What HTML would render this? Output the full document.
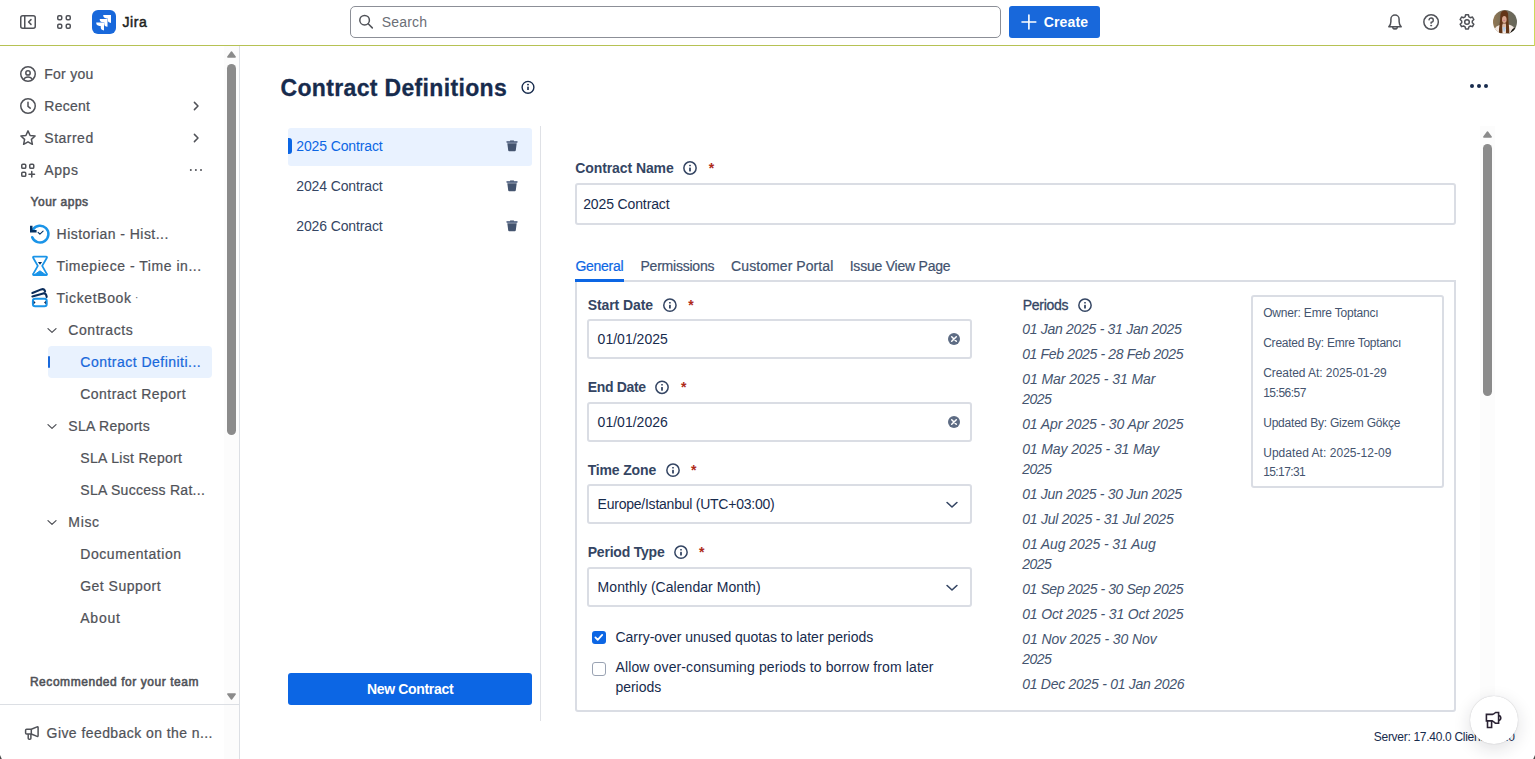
<!DOCTYPE html>
<html lang="en">
<head>
<meta charset="utf-8">
<title>Contract Definitions - Jira</title>
<style>
*{box-sizing:border-box;margin:0;padding:0}
html,body{width:1535px;height:759px;overflow:hidden;background:#fff}
body{position:relative;font-family:"Liberation Sans",sans-serif;color:#172b4d}
.a{position:absolute}
.t{position:absolute;white-space:pre;line-height:20px;height:20px}
svg.i{position:absolute;left:0;top:0;width:1535px;height:759px;overflow:visible;pointer-events:none}
.bx{position:absolute;border:2px solid #dadde4;border-radius:3px;background:#fff}
.thumb{position:absolute;width:9px;border-radius:4.5px;background:#8b8b8b}
.track{position:absolute;width:15px;background:#fcfcfc}
</style>
</head>
<body>

<!-- ================= SIDEBAR ================= -->
<div class="a" style="left:0;top:46px;width:240px;height:713px;border-right:1px solid #dcdfe4;background:#fff"></div>
<div class="track" style="left:224px;top:46px;height:713px"></div>
<div class="thumb" style="left:227px;top:64px;height:370.5px"></div>
<div class="a" style="left:0;top:704px;width:239px;height:1px;background:#dcdfe4"></div>
<div class="a" style="left:48px;top:346px;width:164px;height:32px;border-radius:4px;background:#e9f2fe"></div>
<div class="a" style="left:48px;top:356px;width:2px;height:12px;border-radius:1px;background:#1868db"></div>
<span class="t" style="left:44.3px;top:64.0px;font-size:14px;color:#505258;letter-spacing:0.239px;-webkit-text-stroke:.22px;">For you</span>
<span class="t" style="left:44.3px;top:96.0px;font-size:14px;color:#505258;letter-spacing:0.228px;-webkit-text-stroke:.22px;">Recent</span>
<span class="t" style="left:44.3px;top:128.0px;font-size:14px;color:#505258;letter-spacing:0.496px;-webkit-text-stroke:.22px;">Starred</span>
<span class="t" style="left:44.3px;top:160.0px;font-size:14px;color:#505258;letter-spacing:0.593px;-webkit-text-stroke:.22px;">Apps</span>
<span class="t" style="left:30.6px;top:191.5px;font-size:12px;color:#505258;letter-spacing:0.486px;-webkit-text-stroke:.55px;">Your apps</span>
<span class="t" style="left:56.6px;top:224.0px;font-size:14px;color:#505258;letter-spacing:0.457px;-webkit-text-stroke:.22px;">Historian - Hist...</span>
<span class="t" style="left:56.6px;top:256.0px;font-size:14px;color:#505258;letter-spacing:0.538px;-webkit-text-stroke:.22px;">Timepiece - Time in...</span>
<span class="t" style="left:56.6px;top:288.0px;font-size:14px;color:#505258;letter-spacing:0.630px;-webkit-text-stroke:.22px;">TicketBook</span>
<span class="t" style="left:135.0px;top:288.0px;font-size:10px;color:#505258;">·</span>
<span class="t" style="left:68.3px;top:320.0px;font-size:14px;color:#505258;letter-spacing:0.560px;-webkit-text-stroke:.22px;">Contracts</span>
<span class="t" style="left:80.3px;top:352.0px;font-size:14px;color:#1868db;letter-spacing:0.481px;-webkit-text-stroke:.22px;">Contract Definiti...</span>
<span class="t" style="left:80.3px;top:384.0px;font-size:14px;color:#505258;letter-spacing:0.462px;-webkit-text-stroke:.22px;">Contract Report</span>
<span class="t" style="left:68.3px;top:416.0px;font-size:14px;color:#505258;letter-spacing:0.289px;-webkit-text-stroke:.22px;">SLA Reports</span>
<span class="t" style="left:80.3px;top:448.0px;font-size:14px;color:#505258;letter-spacing:0.316px;-webkit-text-stroke:.22px;">SLA List Report</span>
<span class="t" style="left:80.3px;top:480.0px;font-size:14px;color:#505258;letter-spacing:0.274px;-webkit-text-stroke:.22px;">SLA Success Rat...</span>
<span class="t" style="left:68.3px;top:512.0px;font-size:14px;color:#505258;letter-spacing:0.673px;-webkit-text-stroke:.22px;">Misc</span>
<span class="t" style="left:80.3px;top:544.0px;font-size:14px;color:#505258;letter-spacing:0.552px;-webkit-text-stroke:.22px;">Documentation</span>
<span class="t" style="left:80.2px;top:576.0px;font-size:14px;color:#505258;letter-spacing:0.490px;-webkit-text-stroke:.22px;">Get Support</span>
<span class="t" style="left:80.2px;top:608.0px;font-size:14px;color:#505258;letter-spacing:0.802px;-webkit-text-stroke:.22px;">About</span>
<span class="t" style="left:29.9px;top:671.5px;font-size:12px;color:#505258;letter-spacing:0.550px;-webkit-text-stroke:.55px;">Recommended for your team</span>
<span class="t" style="left:46.6px;top:723.0px;font-size:14px;color:#505258;letter-spacing:0.427px;-webkit-text-stroke:.22px;">Give feedback on the n...</span>

<!-- ================= HEADER ================= -->
<div class="a" style="left:0;top:0;width:1535px;height:45px;background:#fff"></div>
<div class="a" style="left:0;top:45px;width:1535px;height:1px;background:#b6c254"></div>
<div class="a" style="left:1534px;top:0;width:1px;height:46px;background:#ccdb5b"></div>
<div class="a" style="left:350px;top:6px;width:651px;height:32px;border:1px solid #8c8f97;border-radius:5px;background:#fff"></div>
<div class="a" style="left:1009px;top:6px;width:91px;height:32px;border-radius:3px;background:#1868db"></div>
<div class="a" style="left:92px;top:10px;width:24px;height:24px;border-radius:6px;background:#1868db"></div>
<span class="t" style="left:122.4px;top:12.0px;font-size:14px;color:#1e1f21;letter-spacing:0.646px;-webkit-text-stroke:.5px;">Jira</span>
<span class="t" style="left:381.7px;top:12.0px;font-size:14px;color:#6b6e76;letter-spacing:0.188px;">Search</span>
<span class="t" style="left:1043.7px;top:12.0px;font-size:14px;color:#ffffff;font-weight:bold;letter-spacing:0.141px;">Create</span>

<!-- ================= MAIN ================= -->
<div class="a" style="left:540px;top:126px;width:1px;height:595px;background:#dfe1e6"></div>
<div class="a" style="left:288px;top:128px;width:244px;height:38px;border-radius:3px;background:#e9f2ff"></div>
<div class="a" style="left:288px;top:138px;width:4px;height:16px;border-radius:0 3px 3px 0;background:#0c66e4"></div>
<div class="a" style="left:288px;top:673px;width:244px;height:32px;border-radius:3px;background:#0c66e4"></div>

<div class="bx" style="left:575px;top:183px;width:881px;height:42px"></div>
<div class="bx" style="left:575px;top:280px;width:881px;height:432px;border-radius:0 0 3px 3px"></div>
<div class="a" style="left:575px;top:279px;width:49px;height:3px;background:#0c66e4"></div>
<div class="bx" style="left:587px;top:319px;width:385px;height:40px"></div>
<div class="bx" style="left:587px;top:402px;width:385px;height:40px"></div>
<div class="bx" style="left:587px;top:484px;width:385px;height:40px"></div>
<div class="bx" style="left:587px;top:567px;width:385px;height:40px"></div>
<div class="bx" style="left:1251px;top:295px;width:193px;height:193px"></div>
<div class="a" style="left:592px;top:630.5px;width:13.5px;height:13.5px;border-radius:3px;background:#0c66e4"></div>
<div class="a" style="left:592px;top:662px;width:13.5px;height:13.5px;border-radius:3px;border:1.5px solid #9aa3b3;background:#fff"></div>
<div class="track" style="left:1480px;top:126px;height:595px"></div>
<div class="thumb" style="left:1483px;top:144px;height:252px"></div>
<span class="t" style="left:280.5px;top:77.5px;font-size:23px;color:#172b4d;font-weight:bold;letter-spacing:0.338px;-webkit-text-stroke:.3px;">Contract Definitions</span>
<span class="t" style="left:296.3px;top:136.3px;font-size:14px;color:#0c66e4;letter-spacing:-0.129px;">2025 Contract</span>
<span class="t" style="left:296.3px;top:176.3px;font-size:14px;color:#344563;letter-spacing:-0.129px;">2024 Contract</span>
<span class="t" style="left:296.3px;top:216.3px;font-size:14px;color:#344563;letter-spacing:-0.129px;">2026 Contract</span>
<span class="t" style="left:366.9px;top:679.0px;font-size:14px;color:#ffffff;font-weight:bold;letter-spacing:-0.321px;">New Contract</span>
<span class="t" style="left:575.2px;top:158.0px;font-size:14px;color:#344563;font-weight:bold;letter-spacing:-0.083px;">Contract Name</span>
<span class="t" style="left:708.7px;top:158.0px;font-size:14px;color:#ae2a19;font-weight:bold;">*</span>
<span class="t" style="left:583.2px;top:194.3px;font-size:14px;color:#172b4d;letter-spacing:-0.129px;">2025 Contract</span>
<span class="t" style="left:575.5px;top:256.3px;font-size:14px;color:#0c66e4;letter-spacing:-0.302px;-webkit-text-stroke:.2px;">General</span>
<span class="t" style="left:640.5px;top:256.3px;font-size:14px;color:#42526e;letter-spacing:-0.225px;-webkit-text-stroke:.2px;">Permissions</span>
<span class="t" style="left:731.1px;top:256.3px;font-size:14px;color:#42526e;letter-spacing:0.075px;-webkit-text-stroke:.2px;">Customer Portal</span>
<span class="t" style="left:849.7px;top:256.3px;font-size:14px;color:#42526e;letter-spacing:-0.224px;-webkit-text-stroke:.2px;">Issue View Page</span>
<span class="t" style="left:587.7px;top:295.0px;font-size:14px;color:#344563;font-weight:bold;letter-spacing:-0.082px;">Start Date</span>
<span class="t" style="left:688.3px;top:295.0px;font-size:14px;color:#ae2a19;font-weight:bold;">*</span>
<span class="t" style="left:597.6px;top:329.3px;font-size:14px;color:#172b4d;letter-spacing:0.014px;">01/01/2025</span>
<span class="t" style="left:587.7px;top:377.3px;font-size:14px;color:#344563;font-weight:bold;letter-spacing:-0.327px;">End Date</span>
<span class="t" style="left:680.9px;top:377.3px;font-size:14px;color:#ae2a19;font-weight:bold;">*</span>
<span class="t" style="left:597.6px;top:412.0px;font-size:14px;color:#172b4d;letter-spacing:0.014px;">01/01/2026</span>
<span class="t" style="left:587.7px;top:460.2px;font-size:14px;color:#344563;font-weight:bold;letter-spacing:-0.158px;">Time Zone</span>
<span class="t" style="left:691.1px;top:460.2px;font-size:14px;color:#ae2a19;font-weight:bold;">*</span>
<span class="t" style="left:597.6px;top:493.9px;font-size:14px;color:#172b4d;letter-spacing:-0.237px;">Europe/Istanbul (UTC+03:00)</span>
<span class="t" style="left:587.7px;top:542.2px;font-size:14px;color:#344563;font-weight:bold;letter-spacing:-0.209px;">Period Type</span>
<span class="t" style="left:699.1px;top:542.2px;font-size:14px;color:#ae2a19;font-weight:bold;">*</span>
<span class="t" style="left:597.6px;top:577.3px;font-size:14px;color:#172b4d;letter-spacing:0.050px;">Monthly (Calendar Month)</span>
<span class="t" style="left:615.5px;top:627.3px;font-size:14px;color:#172b4d;letter-spacing:-0.016px;">Carry-over unused quotas to later periods</span>
<span class="t" style="left:615.5px;top:657.4px;font-size:14px;color:#172b4d;letter-spacing:0.125px;">Allow over-consuming periods to borrow from later</span>
<span class="t" style="left:615.5px;top:677.3px;font-size:14px;color:#172b4d;letter-spacing:-0.037px;">periods</span>
<span class="t" style="left:1022.7px;top:295.2px;font-size:14px;color:#344563;letter-spacing:-0.278px;-webkit-text-stroke:.3px;">Periods</span>
<span class="t" style="left:1022.2px;top:319.4px;font-size:14px;color:#44546f;font-style:italic;letter-spacing:-0.291px;">01 Jan 2025 - 31 Jan 2025</span>
<span class="t" style="left:1022.2px;top:344.0px;font-size:14px;color:#44546f;font-style:italic;letter-spacing:-0.349px;">01 Feb 2025 - 28 Feb 2025</span>
<span class="t" style="left:1022.2px;top:369.2px;font-size:14px;color:#44546f;font-style:italic;letter-spacing:-0.070px;">01 Mar 2025 - 31 Mar</span>
<span class="t" style="left:1022.2px;top:389.2px;font-size:14px;color:#44546f;font-style:italic;letter-spacing:-0.552px;">2025</span>
<span class="t" style="left:1022.2px;top:414.3px;font-size:14px;color:#44546f;font-style:italic;letter-spacing:-0.111px;">01 Apr 2025 - 30 Apr 2025</span>
<span class="t" style="left:1022.2px;top:439.2px;font-size:14px;color:#44546f;font-style:italic;letter-spacing:-0.121px;">01 May 2025 - 31 May</span>
<span class="t" style="left:1022.2px;top:459.2px;font-size:14px;color:#44546f;font-style:italic;letter-spacing:-0.552px;">2025</span>
<span class="t" style="left:1022.2px;top:484.2px;font-size:14px;color:#44546f;font-style:italic;letter-spacing:-0.282px;">01 Jun 2025 - 30 Jun 2025</span>
<span class="t" style="left:1022.2px;top:509.2px;font-size:14px;color:#44546f;font-style:italic;letter-spacing:-0.239px;">01 Jul 2025 - 31 Jul 2025</span>
<span class="t" style="left:1022.2px;top:534.2px;font-size:14px;color:#44546f;font-style:italic;letter-spacing:-0.089px;">01 Aug 2025 - 31 Aug</span>
<span class="t" style="left:1022.2px;top:554.2px;font-size:14px;color:#44546f;font-style:italic;letter-spacing:-0.552px;">2025</span>
<span class="t" style="left:1022.2px;top:579.2px;font-size:14px;color:#44546f;font-style:italic;letter-spacing:-0.415px;">01 Sep 2025 - 30 Sep 2025</span>
<span class="t" style="left:1022.2px;top:604.2px;font-size:14px;color:#44546f;font-style:italic;letter-spacing:-0.154px;">01 Oct 2025 - 31 Oct 2025</span>
<span class="t" style="left:1022.2px;top:629.2px;font-size:14px;color:#44546f;font-style:italic;letter-spacing:-0.090px;">01 Nov 2025 - 30 Nov</span>
<span class="t" style="left:1022.2px;top:649.2px;font-size:14px;color:#44546f;font-style:italic;letter-spacing:-0.552px;">2025</span>
<span class="t" style="left:1022.2px;top:674.2px;font-size:14px;color:#44546f;font-style:italic;letter-spacing:-0.275px;">01 Dec 2025 - 01 Jan 2026</span>
<span class="t" style="left:1263.2px;top:303.3px;font-size:12px;color:#44546f;letter-spacing:-0.193px;">Owner: Emre Toptancı</span>
<span class="t" style="left:1263.2px;top:333.0px;font-size:12px;color:#44546f;letter-spacing:-0.236px;">Created By: Emre Toptancı</span>
<span class="t" style="left:1263.2px;top:362.8px;font-size:12px;color:#44546f;letter-spacing:-0.060px;">Created At: 2025-01-29</span>
<span class="t" style="left:1263.2px;top:382.6px;font-size:12px;color:#44546f;letter-spacing:-0.488px;">15:56:57</span>
<span class="t" style="left:1263.2px;top:413.2px;font-size:12px;color:#44546f;letter-spacing:-0.216px;">Updated By: Gizem Gökçe</span>
<span class="t" style="left:1263.2px;top:442.9px;font-size:12px;color:#44546f;letter-spacing:0.041px;">Updated At: 2025-12-09</span>
<span class="t" style="left:1263.2px;top:462.4px;font-size:12px;color:#44546f;letter-spacing:-0.603px;">15:17:31</span>
<span class="t" style="left:1373.8px;top:727.0px;font-size:12px;color:#172b4d;letter-spacing:-0.294px;">Server: 17.40.0 Client: 1.7.0</span>
<div class="a" style="left:1470px;top:696px;width:48px;height:48px;border-radius:50%;background:#fff;box-shadow:0 0 1px rgba(30,30,40,.3),0 5px 18px rgba(30,30,40,.14)"></div>

<!-- ================= ICONS ================= -->
<svg class="i" viewBox="0 0 1535 759" fill="none" stroke-linecap="round" stroke-linejoin="round">
<!-- header left icons -->
<g stroke="#505258" stroke-width="1.5">
<rect x="20.75" y="15.75" width="14.5" height="12.5" rx="2"/>
<path d="M24.75 15.75V28.25M31 19.6L28.6 22L31 24.4"/>
<rect x="57.75" y="15.75" width="4" height="4" rx="1.2"/><rect x="66.25" y="15.75" width="4" height="4" rx="1.2"/>
<rect x="57.75" y="24.25" width="4" height="4" rx="1.2"/><rect x="66.25" y="24.25" width="4" height="4" rx="1.2"/>
</g>
<!-- jira logo -->
<g fill="#fff" stroke="none">
<path d="M103.2 15.1H111V22.9A3.3 3.3 0 0 1 107.7 19.6V18.4H106.5A3.3 3.3 0 0 1 103.2 15.1Z"/>
<path d="M99.7 18.9H107.5V26.7A3.3 3.3 0 0 1 104.2 23.4V22.2H103A3.3 3.3 0 0 1 99.7 18.9Z"/>
<path d="M96.2 22.6H104V30.4A3.3 3.3 0 0 1 100.7 27.1V25.9H99.5A3.3 3.3 0 0 1 96.2 22.6Z"/>
</g>
<!-- search icon -->
<g stroke="#505258" stroke-width="1.5"><circle cx="364.6" cy="20.2" r="4.8"/><path d="M368.2 23.8L372.3 27.9"/></g>
<!-- create plus -->
<path d="M1022 22H1035.8M1028.9 15.1V28.9" stroke="#fff" stroke-width="1.6"/>
<!-- bell -->
<g stroke="#505258" stroke-width="1.5">
<path d="M1388.8 26.7C1390.5 25.1 1390.9 23.6 1390.9 21.4V19.2A4.1 4.1 0 0 1 1399.1 19.2V21.4C1399.1 23.6 1399.5 25.1 1401.2 26.7Z"/>
<path d="M1392.7 27.6A2.5 2.5 0 0 0 1397.3 27.6" fill="#8d8f95"/>
<!-- help -->
<circle cx="1431.1" cy="22" r="7.25"/>
<path d="M1429 19.9A2.15 2.15 0 1 1 1431.1 22.3V23.2" stroke-width="1.4"/>
<circle cx="1431.1" cy="25.6" r=".55" fill="#505258" stroke-width=".8"/>
<!-- gear -->
<circle cx="1467" cy="22" r="2.3"/>
<path d="M1465.6 14.75h2.8l.5 2.1 1.5.85 2.05-.65 1.4 2.45-1.55 1.5v1.7l1.55 1.5-1.4 2.45-2.05-.65-1.5.85-.5 2.1h-2.8l-.5-2.1-1.5-.85-2.05.65-1.4-2.45 1.55-1.5v-1.7l-1.55-1.5 1.4-2.45 2.05.65 1.5-.85z"/>
</g>
<!-- avatar -->
<defs>
<clipPath id="av"><circle cx="1505" cy="22" r="12"/></clipPath>
<linearGradient id="avbg" x1="0" x2="1" y1="0" y2="0"><stop offset="0" stop-color="#9a7a52"/><stop offset=".4" stop-color="#756c57"/><stop offset="1" stop-color="#65665c"/></linearGradient>
<filter id="avb" x="-10%" y="-10%" width="120%" height="120%"><feGaussianBlur stdDeviation=".7"/></filter>
</defs>
<g clip-path="url(#av)" stroke="none">
<rect x="1491" y="8" width="28" height="28" fill="url(#avbg)"/>
<g filter="url(#avb)">
<path d="M1494 36V30Q1496 25.6 1500.5 24.8H1509.5Q1513.6 25.6 1515 30V36Z" fill="#f3e8e1"/>
<path d="M1509.5 36Q1510.5 30.5 1513.5 28.2Q1517 27.5 1519 28V36Z" fill="#15120f"/>
<path d="M1497 33.2Q1505 35.2 1512 32.8V36H1497Z" fill="#1b1714"/>
<path d="M1504.6 10.6C1500.6 10.6 1500.3 14.5 1500.2 18.5C1500.1 23 1498.8 27 1498.9 33H1502.5C1502.3 29.5 1502.4 26.5 1502.6 24H1505.9C1506.1 26.5 1506 29.5 1505.9 33H1509.3C1509.4 28 1508.5 23 1508.3 18.5C1508.1 14.5 1508.6 10.6 1504.6 10.6Z" fill="#633519"/>
<ellipse cx="1504.3" cy="19.4" rx="2.3" ry="3.5" fill="#d8a78f"/>
<path d="M1502.6 23.5H1505.9L1505.8 29H1502.8Z" fill="#dfbba8"/>
<path d="M1502.6 27.2H1506L1505 31.5H1503.6Z" fill="#b3cceb"/>
<ellipse cx="1504.2" cy="20.4" rx="1.1" ry=".6" fill="#c9808a"/>
</g>
</g>
<!-- more dots -->
<g fill="#172b4d" stroke="none"><circle cx="1472" cy="86" r="2"/><circle cx="1479" cy="86" r="2"/><circle cx="1486" cy="86" r="2"/></g>

<!-- sidebar icons -->
<g stroke="#505258" stroke-width="1.5">
<circle cx="28" cy="74" r="7.25"/><circle cx="28" cy="72.9" r="2.2"/><path d="M23.6 79.5C24.6 77.6 26.2 76.9 28 76.9S31.4 77.6 32.4 79.5"/>
<circle cx="28" cy="106" r="7.25"/><path d="M28 102.2V106.4L30.2 108.2"/>
<path d="M28 130.9L30.1 135.5L35.1 136L31.4 139.4L32.4 144.3L28 141.8L23.6 144.3L24.6 139.4L20.9 136L25.9 135.5Z"/>
<rect x="21.75" y="164.25" width="4" height="4" rx="1.1"/><rect x="29.75" y="164.25" width="4" height="4" rx="1.1"/><rect x="21.75" y="172.25" width="4" height="4" rx="1.1"/>
<path d="M31.75 171.6V177.1M29 174.35H34.5"/>
<path d="M194.4 102.4L198 106L194.4 109.6M194.4 134.4L198 138L194.4 141.6"/>
</g>
<g fill="#505258" stroke="none"><circle cx="190.8" cy="169.9" r="1"/><circle cx="195.9" cy="169.9" r="1"/><circle cx="201" cy="169.9" r="1"/></g>
<g stroke="#505258" stroke-width="1.3">
<path d="M48 328.6L52 332.4L56 328.6M48 424.6L52 428.4L56 424.6M48 520.6L52 524.4L56 520.6"/>
</g>
<!-- megaphone sidebar -->
<g stroke="#505258" stroke-width="1.5">
<path d="M26.6 729.3H31.3L37.1 726.9Q38.1 726.6 38.1 727.7V735.6Q38.1 736.7 37.1 736.4L31.3 734H26.6Q25.6 734 25.6 733V730.3Q25.6 729.3 26.6 729.3ZM31.3 729.3V734M28.2 734.2V738.2Q28.2 739.2 29.2 739.2H29.9Q30.9 739.2 30.9 738.2V734.2"/>
</g>
<!-- scroll arrows -->
<g fill="#8b8b8b" stroke="#8b8b8b" stroke-width="1.4">
<path d="M231.5 52L235.2 57H227.8Z"/><path d="M231.5 699L235.2 694H227.8Z"/>
<path d="M1487.5 132L1491.2 137H1483.8Z"/>
</g>
<!-- historian -->
<g stroke="#1a94e8" stroke-width="2.5" stroke-linecap="round"><path d="M33 229.5A8.4 8.4 0 1 1 32.2 237.2"/></g>
<g stroke="#063263" stroke-width="2.5" stroke-linecap="butt" stroke-linejoin="miter"><path d="M31.25 225.7V231.35H36.6"/></g>
<path d="M38.1 232.3L39.9 234.2L43.1 231.2" stroke="#063263" stroke-width="1.1"/>
<!-- timepiece -->
<g stroke="#1a94e8" stroke-width="1.8"><path d="M34 256.7H46Q47.6 256.7 46.6 258.2L42.2 265.9L46.6 273.6Q47.6 275.1 46 275.1H34Q32.4 275.1 33.4 273.6L37.8 265.9L33.4 258.2Q32.4 256.7 34 256.7Z"/></g>
<path d="M34 275L40 270.8L46 275Z" fill="#1a94e8" stroke="#1a94e8" stroke-width="1"/>
<path d="M37.9 262H42.1L40 264.7Z" fill="#063263" stroke="none"/>
<!-- ticketbook -->
<g stroke="#0b2d5c" stroke-width="2.1"><path d="M32.4 293L41.2 289.4Q44.2 288.5 45.1 291.4M32.4 296.4L43.2 293.4Q46.2 292.9 46.7 297"/></g>
<rect x="32.9" y="298.7" width="13.8" height="7.6" rx="2.2" stroke="#1a94e8" stroke-width="2"/>
<path d="M33.7 300.7L35.6 302.5L33.7 304.3ZM45.9 300.7L44 302.5L45.9 304.3Z" fill="#0b2d5c" stroke="none"/>

<!-- main icons -->
<g stroke="#172b4d" stroke-width="1.4"><circle cx="528" cy="87.3" r="5.9"/></g>
<g fill="#172b4d" stroke="none"><rect x="527.2" y="86.5" width="1.6" height="3.6" rx=".4"/><circle cx="528" cy="84.6" r=".95"/></g>
<!-- trash icons -->
<g stroke="none">
<g transform="translate(0 0)"><path d="M507.3 143.2H516.7L515.8 150.3Q515.7 151.2 514.8 151.2H509.2Q508.3 151.2 508.2 150.3Z" fill="#44546f"/><rect x="506.5" y="141" width="11" height="1.9" rx=".4" fill="#6b7a96"/><rect x="510" y="140.4" width="4" height="1.2" rx=".4" fill="#3a4a66"/></g>
<g transform="translate(0 40)"><path d="M507.3 143.2H516.7L515.8 150.3Q515.7 151.2 514.8 151.2H509.2Q508.3 151.2 508.2 150.3Z" fill="#44546f"/><rect x="506.5" y="141" width="11" height="1.9" rx=".4" fill="#6b7a96"/><rect x="510" y="140.4" width="4" height="1.2" rx=".4" fill="#3a4a66"/></g>
<g transform="translate(0 80)"><path d="M507.3 143.2H516.7L515.8 150.3Q515.7 151.2 514.8 151.2H509.2Q508.3 151.2 508.2 150.3Z" fill="#44546f"/><rect x="506.5" y="141" width="11" height="1.9" rx=".4" fill="#6b7a96"/><rect x="510" y="140.4" width="4" height="1.2" rx=".4" fill="#3a4a66"/></g>
</g>
<!-- info icons (form) -->
<g transform="translate(0 0)"><circle cx="690" cy="168" r="6.15" stroke="#344563" stroke-width="1.5"/><rect x="689.1" y="167.6" width="1.8" height="3.8" rx=".4" fill="#344563" stroke="none"/><rect x="689.1" y="164.7" width="1.8" height="1.5" rx=".5" fill="#344563" stroke="none"/></g>
<g transform="translate(-20.1 137.2)"><circle cx="690" cy="168" r="6.15" stroke="#344563" stroke-width="1.5"/><rect x="689.1" y="167.6" width="1.8" height="3.8" rx=".4" fill="#344563" stroke="none"/><rect x="689.1" y="164.7" width="1.8" height="1.5" rx=".5" fill="#344563" stroke="none"/></g>
<g transform="translate(-28 219.3)"><circle cx="690" cy="168" r="6.15" stroke="#344563" stroke-width="1.5"/><rect x="689.1" y="167.6" width="1.8" height="3.8" rx=".4" fill="#344563" stroke="none"/><rect x="689.1" y="164.7" width="1.8" height="1.5" rx=".5" fill="#344563" stroke="none"/></g>
<g transform="translate(-17 302.2)"><circle cx="690" cy="168" r="6.15" stroke="#344563" stroke-width="1.5"/><rect x="689.1" y="167.6" width="1.8" height="3.8" rx=".4" fill="#344563" stroke="none"/><rect x="689.1" y="164.7" width="1.8" height="1.5" rx=".5" fill="#344563" stroke="none"/></g>
<g transform="translate(-9 384.2)"><circle cx="690" cy="168" r="6.15" stroke="#344563" stroke-width="1.5"/><rect x="689.1" y="167.6" width="1.8" height="3.8" rx=".4" fill="#344563" stroke="none"/><rect x="689.1" y="164.7" width="1.8" height="1.5" rx=".5" fill="#344563" stroke="none"/></g>
<g transform="translate(395 137.2)"><circle cx="690" cy="168" r="6.15" stroke="#344563" stroke-width="1.5"/><rect x="689.1" y="167.6" width="1.8" height="3.8" rx=".4" fill="#344563" stroke="none"/><rect x="689.1" y="164.7" width="1.8" height="1.5" rx=".5" fill="#344563" stroke="none"/></g>
<!-- clear icons -->
<g transform="translate(0 0)"><circle cx="954" cy="339" r="6" fill="#5e6c84" stroke="none"/><path d="M951.7 336.7L956.3 341.3M956.3 336.7L951.7 341.3" stroke="#fff" stroke-width="1.5"/></g>
<g transform="translate(0 83)"><circle cx="954" cy="339" r="6" fill="#5e6c84" stroke="none"/><path d="M951.7 336.7L956.3 341.3M956.3 336.7L951.7 341.3" stroke="#fff" stroke-width="1.5"/></g>
<!-- select chevrons -->
<g stroke="#344563" stroke-width="1.6"><path d="M947.1 502.5L952 507L956.9 502.5M947.1 585.5L952 590L956.9 585.5"/></g>
<!-- check -->
<path d="M595.4 637.4L597.7 639.8L602.2 634.9" stroke="#fff" stroke-width="1.8"/>
<!-- floating megaphone -->
<g stroke="#2a2233" stroke-width="1.6" stroke-linejoin="miter">
<path d="M1486.4 714.4H1492.4Q1493.6 714.2 1495.6 712.5H1498.6V723.3H1495.6Q1493.6 721.4 1492.4 720.9H1486.4ZM1487.5 721V727.5H1491.6V721M1498.8 715.3A2.8 2.8 0 0 1 1498.8 720.7"/>
</g>
<path d="M1535 755L1535 759L1533.2 759ZM0 755L0 759L1.8 759Z" fill="#4a4a4a" stroke="none"/>
</svg>
</body>
</html>
